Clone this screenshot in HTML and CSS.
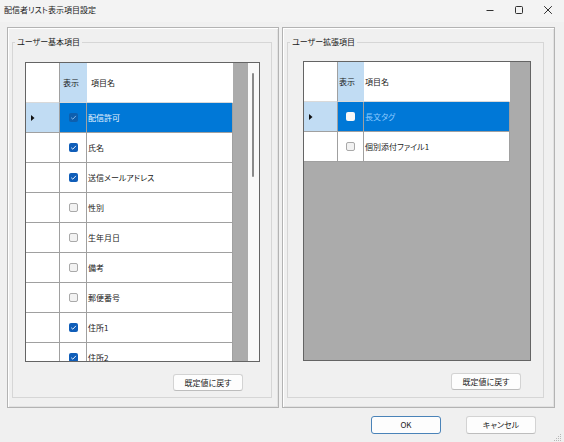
FILE: index.html
```html
<!DOCTYPE html>
<html lang="ja">
<head>
<meta charset="utf-8">
<title>配信者リスト表示項目設定</title>
<link rel="stylesheet" href="styles.css">
</head>
<body>
<div class="window">
  <div class="titlebar">
    <span class="title">配信者リスト表示項目設定</span>
    <div class="controls">
      <span class="ctl"><svg width="10" height="10" viewBox="0 0 10 10"><path d="M1.5 5.5 H8.5" stroke="#1a1a1a" stroke-width="0.9"/></svg></span>
      <span class="ctl"><svg width="10" height="10" viewBox="0 0 10 10"><rect x="1.5" y="1.5" width="7" height="7" rx="1" fill="none" stroke="#1a1a1a" stroke-width="0.9"/></svg></span>
      <span class="ctl"><svg width="10" height="10" viewBox="0 0 10 10"><path d="M1.2 1.2 L8.8 8.8 M8.8 1.2 L1.2 8.8" stroke="#1a1a1a" stroke-width="0.9"/></svg></span>
    </div>
  </div>
  <div class="content">
    <div class="panels">
      <div class="panel panel-left">
        <fieldset class="group">
          <legend>ユーザー基本項目</legend>
          <div class="gbody gbody-left">
            <div class="grid grid-left">
              <div class="table">
                <div class="row hdr">
                  <div class="cell rh"></div>
                  <div class="cell ck ck-l hsel"><span class="htext">表示</span></div>
                  <div class="cell nm"><span class="htext hn-l">項目名</span></div>
                </div>
                <div class="row sel">
                  <div class="cell rh rhsel"><svg width="4" height="6" viewBox="0 0 4 6"><path d="M0 0 L3.5 3 L0 6 Z" fill="#111"/></svg></div>
                  <div class="cell ck ck-l"><span class="cb cb-on-sel"><svg width="9" height="9" viewBox="0 0 9 9"><path d="M2.2 4.7 L3.8 6.2 L6.9 2.9" fill="none" stroke="#8fc0ee" stroke-width="0.9"/></svg></span></div>
                  <div class="cell nm"><span class="txt sel-l">配信許可</span></div>
                </div>
                <div class="row">
                  <div class="cell rh"></div>
                  <div class="cell ck ck-l"><span class="cb cb-on"><svg width="9" height="9" viewBox="0 0 9 9"><path d="M2.2 4.7 L3.8 6.2 L6.9 2.9" fill="none" stroke="#fff" stroke-width="0.9"/></svg></span></div>
                  <div class="cell nm"><span class="txt">氏名</span></div>
                </div>
                <div class="row">
                  <div class="cell rh"></div>
                  <div class="cell ck ck-l"><span class="cb cb-on"><svg width="9" height="9" viewBox="0 0 9 9"><path d="M2.2 4.7 L3.8 6.2 L6.9 2.9" fill="none" stroke="#fff" stroke-width="0.9"/></svg></span></div>
                  <div class="cell nm"><span class="txt">送信メールアドレス</span></div>
                </div>
                <div class="row">
                  <div class="cell rh"></div>
                  <div class="cell ck ck-l"><span class="cb cb-off"></span></div>
                  <div class="cell nm"><span class="txt">性別</span></div>
                </div>
                <div class="row">
                  <div class="cell rh"></div>
                  <div class="cell ck ck-l"><span class="cb cb-off"></span></div>
                  <div class="cell nm"><span class="txt">生年月日</span></div>
                </div>
                <div class="row">
                  <div class="cell rh"></div>
                  <div class="cell ck ck-l"><span class="cb cb-off"></span></div>
                  <div class="cell nm"><span class="txt">備考</span></div>
                </div>
                <div class="row">
                  <div class="cell rh"></div>
                  <div class="cell ck ck-l"><span class="cb cb-off"></span></div>
                  <div class="cell nm"><span class="txt">郵便番号</span></div>
                </div>
                <div class="row">
                  <div class="cell rh"></div>
                  <div class="cell ck ck-l"><span class="cb cb-on"><svg width="9" height="9" viewBox="0 0 9 9"><path d="M2.2 4.7 L3.8 6.2 L6.9 2.9" fill="none" stroke="#fff" stroke-width="0.9"/></svg></span></div>
                  <div class="cell nm"><span class="txt">住所1</span></div>
                </div>
                <div class="row">
                  <div class="cell rh"></div>
                  <div class="cell ck ck-l"><span class="cb cb-on"><svg width="9" height="9" viewBox="0 0 9 9"><path d="M2.2 4.7 L3.8 6.2 L6.9 2.9" fill="none" stroke="#fff" stroke-width="0.9"/></svg></span></div>
                  <div class="cell nm"><span class="txt">住所2</span></div>
                </div>
              </div>
              <div class="fill"></div>
              <div class="vscroll"><div class="thumb"></div></div>
            </div>
            <div class="btnrow"><button class="btn">既定値に戻す</button></div>
          </div>
        </fieldset>
      </div>
      <div class="panel panel-right">
        <fieldset class="group">
          <legend>ユーザー拡張項目</legend>
          <div class="gbody gbody-right">
            <div class="grid grid-right">
              <div class="table">
                <div class="row hdr">
                  <div class="cell rh"></div>
                  <div class="cell ck ck-r hsel"><span class="htext">表示</span></div>
                  <div class="cell nm"><span class="htext hn-r">項目名</span></div>
                </div>
                <div class="row sel">
                  <div class="cell rh rhsel"><svg width="4" height="6" viewBox="0 0 4 6"><path d="M0 0 L3.5 3 L0 6 Z" fill="#111"/></svg></div>
                  <div class="cell ck ck-r"><span class="cb cb-off-sel"></span></div>
                  <div class="cell nm"><span class="txt sel-r">長文タグ</span></div>
                </div>
                <div class="row">
                  <div class="cell rh"></div>
                  <div class="cell ck ck-r"><span class="cb cb-off"></span></div>
                  <div class="cell nm"><span class="txt">個別添付ファイル1</span></div>
                </div>
              </div>
              <div class="fill"></div>
            </div>
            <div class="btnrow"><button class="btn">既定値に戻す</button></div>
          </div>
        </fieldset>
      </div>
    </div>
    <div class="footer">
      <button class="btn btn-ok">OK</button>
      <button class="btn">キャンセル</button>
    </div>
    <div class="gripwrap">
      <svg class="grip" width="9" height="9" viewBox="0 0 9 9">
        <rect x="7" y="1" width="1" height="1" fill="#b8b8b8"/>
        <rect x="5" y="3" width="1" height="1" fill="#b8b8b8"/>
        <rect x="7" y="3" width="1" height="1" fill="#b8b8b8"/>
        <rect x="3" y="5" width="1" height="1" fill="#b8b8b8"/>
        <rect x="5" y="5" width="1" height="1" fill="#b8b8b8"/>
        <rect x="7" y="5" width="1" height="1" fill="#b8b8b8"/>
        <rect x="1" y="7" width="1" height="1" fill="#b8b8b8"/>
        <rect x="3" y="7" width="1" height="1" fill="#b8b8b8"/>
        <rect x="5" y="7" width="1" height="1" fill="#b8b8b8"/>
        <rect x="7" y="7" width="1" height="1" fill="#b8b8b8"/>
      </svg>
    </div>
  </div>
</div>
</body>
</html>
```

FILE: styles.css
```css
html, body {
  margin: 0;
  padding: 0;
}
body {
  width: 564px;
  height: 442px;
  overflow: hidden;
  background: #f0f0f0;
  font-family: "Noto Sans CJK JP", "Noto Sans", sans-serif;
  font-size: 8px;
  color: #1a1a1a;
  font-feature-settings: "palt";
}
.window {
  width: 564px;
  height: 442px;
  position: relative;
  background: #f0f0f0;
}
.titlebar {
  height: 22px;
  display: flex;
  align-items: center;
  justify-content: space-between;
  background: #f3f3f3;
  padding-left: 4px;
  box-sizing: border-box;
}
.title {
  font-size: 8px;
  line-height: 12px;
  margin-top: -2px;
}
.controls {
  display: flex;
  align-items: center;
  margin-top: -2px;
  padding-right: 2px;
}
.ctl {
  width: 29px;
  display: flex;
  justify-content: center;
}
.content {
  padding: 5px 0 0 7px;
}
.panels {
  display: flex;
  gap: 3px;
  height: 381px;
}
.panel {
  box-sizing: border-box;
  height: 381px;
  border: 1px solid #b3b3b3;
  box-shadow: inset 1px 1px 0 #ffffff, inset -1px -1px 0 #e2e2e2;
  display: flex;
  flex-direction: column;
}
.panel-left {
  width: 272px;
}
.panel-right {
  width: 273px;
}
.group {
  margin: 8px 6px 9px 4px;
  padding: 0;
  border: 1px solid #d6d6d6;
  min-width: 0;
  flex: 1;
}
.panel-right .group {
  margin-right: 10px;
}
.group legend {
  margin-left: 2px;
  padding: 0 2px;
  font-size: 8px;
  line-height: 12px;
}
.gbody-left {
  padding: 14px 0 0 12px;
}
.gbody-right {
  padding: 13px 0 0 15px;
}
.grid {
  box-sizing: border-box;
  height: 300px;
  border: 1px solid #646464;
  background: #ababab;
  display: flex;
  overflow: hidden;
}
.grid-left {
  width: 235px;
}
.grid-right {
  width: 228px;
}
.table {
  flex: none;
  display: flex;
  flex-direction: column;
}
.fill {
  flex: 1;
}
.vscroll {
  width: 11px;
  background: #f9f9f9;
  position: relative;
}
.thumb {
  margin: 10px 0 0 4px;
  width: 2px;
  height: 104px;
  border-radius: 1px;
  background: #8a8a8a;
}
.row {
  display: flex;
  height: 30px;
  flex: none;
}
.row.hdr {
  height: 40px;
}
.cell {
  box-sizing: border-box;
  border-right: 1px solid #a0a0a0;
  border-bottom: 1px solid #a0a0a0;
  background: #ffffff;
  display: flex;
  align-items: center;
}
.hdr .cell {
  border-bottom-color: #d9d9d9;
}
.hdr .ck {
  border-right-color: #c1dcf3;
}
.hdr .nm {
  border-right-color: #ffffff;
}
.rh {
  width: 34px;
  padding-left: 5px;
}
.rhsel {
  background: #c1dcf3;
}
.ck {
  justify-content: center;
}
.ck-l {
  width: 27px;
}
.ck-r {
  width: 26px;
}
.hdr .ck {
  justify-content: flex-start;
}
.ck-l .htext {
  padding-left: 3px;
}
.ck-r .htext {
  padding-left: 1px;
}
.hsel {
  background: #c1dcf3;
}
.nm {
  width: 146px;
  padding-left: 1px;
}
.hn-l {
  padding-left: 3px;
}
.hn-r {
  padding-left: 0;
}
.htext, .txt {
  line-height: 12px;
  white-space: nowrap;
}
.sel .ck, .sel .nm {
  background: #0078d7;
}
.sel-l {
  color: #eaf4ff;
}
.sel-r {
  color: #8ccaff;
}
.cb {
  box-sizing: border-box;
  width: 9px;
  height: 9px;
  border-radius: 2px;
  display: flex;
  align-items: center;
  justify-content: center;
}
.cb svg {
  display: block;
}
.cb-on {
  background: #0f5db8;
}
.cb-on-sel {
  background: #0d5fae;
}
.cb-off {
  border: 1px solid #a9a9a9;
  background: #f2f2f2;
}
.cb-off-sel {
  background: #f7f7f7;
}
.btnrow {
  display: flex;
  padding: 12px 0 0 148px;
}
.btn {
  box-sizing: border-box;
  width: 70px;
  height: 17px;
  padding: 0;
  margin: 0;
  border: 1px solid #d3d3d3;
  border-bottom-color: #bdbdbd;
  border-radius: 3px;
  background: #fdfdfd;
  font-family: "Noto Sans CJK JP", "Noto Sans", sans-serif;
  font-size: 8px;
  line-height: 12px;
  color: #1a1a1a;
  font-feature-settings: "palt";
}
.footer {
  display: flex;
  justify-content: flex-end;
  gap: 25px;
  padding-right: 28px;
  margin-top: 8px;
}
.footer .btn {
  height: 18px;
}
.btn-ok {
  border: 1px solid #4a83b8;
}
.gripwrap {
  display: flex;
  justify-content: flex-end;
  padding-right: 2px;
  margin-top: -1px;
}
.grip {
  display: block;
}
```
